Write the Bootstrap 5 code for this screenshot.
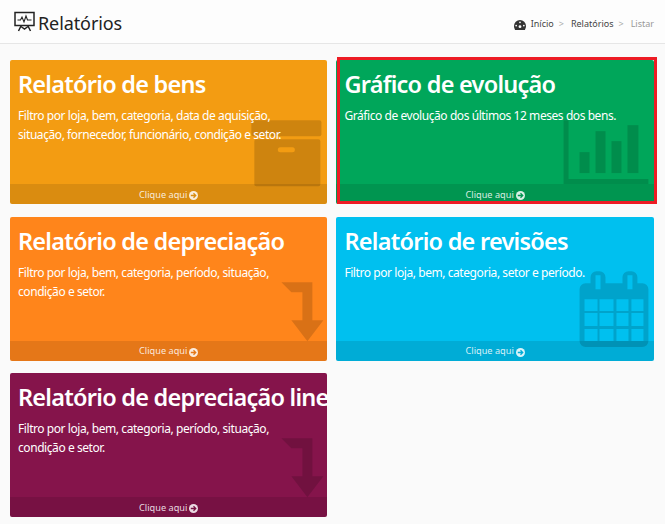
<!DOCTYPE html>
<html lang="pt-BR">
<head>
<meta charset="utf-8">
<title>Relatórios</title>
<link href="https://cdn.jsdelivr.net/npm/bootstrap@5.3.0/dist/css/bootstrap.min.css" rel="stylesheet">
<style>
html,body{height:100%;}
body{background:#fafafa;font-family:"Noto Sans","Liberation Sans",sans-serif;color:#333;overflow:hidden;}
.topbar{height:44px;background:#fdfdfd;border-bottom:1px solid #e6e6e6;padding:0 11px 0 14px;}
.page-name{font-size:18px;font-weight:400;line-height:1;color:#222;margin:3px 0 0 3px;letter-spacing:-.1px;}
.crumbs{font-size:9px;color:#444;margin-top:5px;}
.crumbs .sep{color:#aaa;margin:0 7px 0 5px;}
.crumbs .last{color:#999;}
.crumb-icon{margin-right:5px;margin-top:2px;}
.board{padding:16px 11.2px 0 10px;}
.board .row{--bs-gutter-x:9px;--bs-gutter-y:12.3px;margin-left:-4.5px;margin-right:-4.5px;}
.tile{height:144.3px;border-radius:2px;overflow:hidden;color:#fff;position:relative;display:flex;flex-direction:column;}
.tile-body{flex:1;padding:9px 8px 0;position:relative;z-index:1;min-height:0;}
.tile-title{font-size:23.5px;font-weight:600;line-height:30px;white-space:nowrap;margin:0 0 7px;letter-spacing:-.75px;}
.tile-text{font-size:12px;line-height:19px;margin:0;letter-spacing:-.43px;}
.tile-art{position:absolute;left:0;top:0;width:100%;height:100%;fill:rgba(0,0,0,.15);}
.tile-foot{height:20px;flex:none;background:rgba(0,0,0,.1);color:rgba(255,255,255,.85);font-size:9.2px;line-height:20px;padding-top:1px;text-align:center;position:relative;z-index:1;display:flex;justify-content:center;align-items:center;gap:2px;}
.tile-foot svg{margin-top:2px;}
.bg-bens{background:#f39c12;}
.bg-evol{background:#00a65a;}
.bg-depr{background:#ff851b;}
.bg-rev{background:#00c0ef;}
.bg-line{background:#85144b;}
.mark-frame{position:absolute;left:1px;top:-3px;right:-3px;bottom:0;border:3px solid #ed1c24;z-index:2;pointer-events:none;}
.tile-wrap{position:relative;}
</style>
</head>
<body>
<header class="topbar d-flex align-items-center justify-content-between">
  <div class="d-flex align-items-center">
    <svg width="21" height="21" viewBox="0 0 21 21" fill="none" stroke="#222" stroke-width="1.5"><rect x="1" y="1.5" width="19" height="13"/><path d="M3.5 9h3l1.5-3 2 5 2-6 1.5 4h4" stroke-width="1.1"/><path d="M7 15l-2.5 5M14 15l2.5 5M7 15.5l3.5 2.5 3.5-2.5" stroke-width="1.5"/></svg>
    <h1 class="page-name">Relatórios</h1>
  </div>
  <nav class="crumbs d-flex align-items-center">
    <svg class="crumb-icon" width="12" height="10" viewBox="0 0 11 9"><path d="M5.5 0A5.5 5.5 0 0 0 0 5.5C0 7 .5 8 1 9h9c.5-1 1-2 1-3.500A5.500 5.500 0 0 0 5.500 0z" fill="#333"/><circle cx="5.500" cy="6" r="1.300" fill="#fdfdfd"/><circle cx="2" cy="5" r=".8" fill="#fdfdfd"/><circle cx="9" cy="5" r=".8" fill="#fdfdfd"/><circle cx="5.500" cy="2" r=".8" fill="#fdfdfd"/></svg>
    <span>Início</span><span class="sep">&gt;</span>
    <span>Relatórios</span><span class="sep">&gt;</span>
    <span class="last">Listar</span>
  </nav>
</header>
<main class="board">
  <div class="row">
    <div class="col-6">
      <div class="tile bg-bens">
        <svg class="tile-art" viewBox="0 0 317 144"><rect x="241" y="60" width="70" height="16" rx="2"/><path fill-rule="evenodd" d="M246 79h62a2 2 0 0 1 2 2v43a2 2 0 0 1-2 2h-62a2 2 0 0 1-2-2V81a2 2 0 0 1 2-2zM270 87a2 2 0 0 0 0 5h12a2 2 0 0 0 0-5z"/></svg>
        <div class="tile-body">
          <h2 class="tile-title">Relatório de bens</h2>
          <p class="tile-text">Filtro por loja, bem, categoria, data de aquisição,<br>situação, fornecedor, funcionário, condição e setor.</p>
        </div>
        <a class="tile-foot text-decoration-none">Clique aqui <svg width="9" height="9" viewBox="0 0 10 10"><circle cx="5" cy="5" r="5" fill="currentColor"/><path d="M2 5h5M5 2.500 7.500 5 5 7.500" fill="none" stroke="#d98c10" stroke-width="1.400"/></svg></a>
      </div>
    </div>
    <div class="col-6">
      <div class="tile-wrap">
        <div class="tile bg-evol">
          <svg class="tile-art" viewBox="0 0 318 144"><path d="M228 60h5v59h80v5h-85z"/><rect x="244" y="92" width="10" height="21"/><rect x="260" y="71" width="10" height="42"/><rect x="276" y="81" width="10" height="32"/><rect x="292" y="65" width="11" height="48"/></svg>
          <div class="tile-body">
            <h2 class="tile-title">Gráfico de evolução</h2>
            <p class="tile-text">Gráfico de evolução dos últimos 12 meses dos bens.</p>
          </div>
          <a class="tile-foot text-decoration-none">Clique aqui <svg width="9" height="9" viewBox="0 0 10 10"><circle cx="5" cy="5" r="5" fill="currentColor"/><path d="M2 5h5M5 2.500 7.500 5 5 7.500" fill="none" stroke="#009551" stroke-width="1.400"/></svg></a>
        </div>
        <div class="mark-frame"></div>
      </div>
    </div>
    <div class="col-6">
      <div class="tile bg-depr">
        <svg class="tile-art" viewBox="0 0 317 144"><path d="M271 65h31v38h11l-16 21-16-21h11V75h-11z"/></svg>
        <div class="tile-body">
          <h2 class="tile-title">Relatório de depreciação</h2>
          <p class="tile-text">Filtro por loja, bem, categoria, período, situação,<br>condição e setor.</p>
        </div>
        <a class="tile-foot text-decoration-none">Clique aqui <svg width="9" height="9" viewBox="0 0 10 10"><circle cx="5" cy="5" r="5" fill="currentColor"/><path d="M2 5h5M5 2.500 7.500 5 5 7.500" fill="none" stroke="#e57818" stroke-width="1.400"/></svg></a>
      </div>
    </div>
    <div class="col-6">
      <div class="tile bg-rev">
        <svg class="tile-art" viewBox="0 0 318 144"><path fill-rule="evenodd" d="M250 66h5v-6a6 6 0 0 1 6-6h3a6 6 0 0 1 6 6v6h17v-6a6 6 0 0 1 6-6h3a6 6 0 0 1 6 6v6h5a6 6 0 0 1 6 6v52a6 6 0 0 1-6 6h-57a6 6 0 0 1-6-6V72a6 6 0 0 1 6-6zM260 58v14h5V58zM292 58v14h5V58zM249 82v12h13V82zM264 82v12h14V82zM281 82v12h12V82zM296 82v12h12V82zM249 96v13h13V96zM264 96v13h14V96zM281 96v13h12V96zM296 96v13h12V96zM249 112v12h13v-12zM264 112v12h14v-12zM281 112v12h12v-12zM296 112v12h12v-12z"/></svg>
        <div class="tile-body">
          <h2 class="tile-title">Relatório de revisões</h2>
          <p class="tile-text">Filtro por loja, bem, categoria, setor e período.</p>
        </div>
        <a class="tile-foot text-decoration-none">Clique aqui <svg width="9" height="9" viewBox="0 0 10 10"><circle cx="5" cy="5" r="5" fill="currentColor"/><path d="M2 5h5M5 2.500 7.500 5 5 7.500" fill="none" stroke="#00acd7" stroke-width="1.400"/></svg></a>
      </div>
    </div>
    <div class="col-6">
      <div class="tile bg-line">
        <svg class="tile-art" viewBox="0 0 317 144"><path d="M271 65h31v38h11l-16 21-16-21h11V75h-11z"/></svg>
        <div class="tile-body">
          <h2 class="tile-title">Relatório de depreciação linear</h2>
          <p class="tile-text">Filtro por loja, bem, categoria, período, situação,<br>condição e setor.</p>
        </div>
        <a class="tile-foot text-decoration-none">Clique aqui <svg width="9" height="9" viewBox="0 0 10 10"><circle cx="5" cy="5" r="5" fill="currentColor"/><path d="M2 5h5M5 2.500 7.500 5 5 7.500" fill="none" stroke="#771243" stroke-width="1.400"/></svg></a>
      </div>
    </div>
  </div>
</main>
</body>
</html>
